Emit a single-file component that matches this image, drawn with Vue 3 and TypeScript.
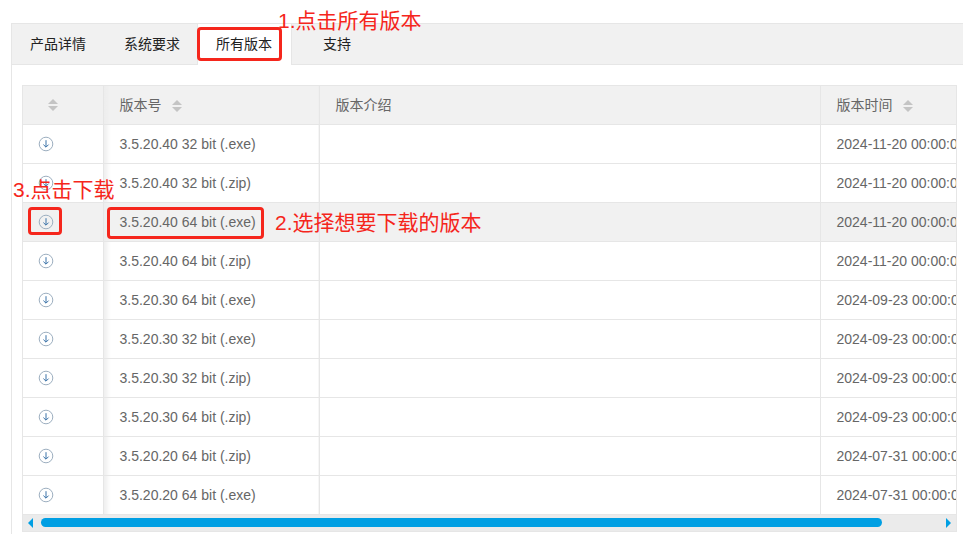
<script setup lang="ts">
interface Row { name: string; date: string; hover?: boolean }
const rows: Row[] = [
  { name: '3.5.20.40 32 bit (.exe)', date: '2024-11-20 00:00:00' },
  { name: '3.5.20.40 32 bit (.zip)', date: '2024-11-20 00:00:00' },
  { name: '3.5.20.40 64 bit (.exe)', date: '2024-11-20 00:00:00', hover: true },
  { name: '3.5.20.40 64 bit (.zip)', date: '2024-11-20 00:00:00' },
  { name: '3.5.20.30 64 bit (.exe)', date: '2024-09-23 00:00:00' },
  { name: '3.5.20.30 32 bit (.exe)', date: '2024-09-23 00:00:00' },
  { name: '3.5.20.30 32 bit (.zip)', date: '2024-09-23 00:00:00' },
  { name: '3.5.20.30 64 bit (.zip)', date: '2024-09-23 00:00:00' },
  { name: '3.5.20.20 64 bit (.zip)', date: '2024-07-31 00:00:00' },
  { name: '3.5.20.20 64 bit (.exe)', date: '2024-07-31 00:00:00' },
]
const tabs = ['产品详情', '系统要求', '所有版本', '支持']
</script>

<template>
  <div class="page">
    <div class="panel">
      <div class="tabbar">
        <div v-for="(t, i) in tabs" :key="t" class="tab" :class="['tab' + i, { active: i === 2 }]">{{ t }}</div>
      </div>
      <div class="body">
        <div class="grid">
          <div class="viewport">
            <table>
              <colgroup>
                <col class="c1" /><col class="c2" /><col class="c3" /><col class="c4" />
              </colgroup>
              <thead>
                <tr>
                  <th class="head-first"><span class="sort"><i class="up"></i><i class="down"></i></span></th>
                  <th class="shadow">版本号<span class="sort gap"><i class="up"></i><i class="down"></i></span></th>
                  <th>版本介绍</th>
                  <th>版本时间<span class="sort gap"><i class="up"></i><i class="down"></i></span></th>
                </tr>
              </thead>
              <tbody>
                <tr v-for="r in rows" :key="r.name" :class="{ hover: r.hover }">
                  <td class="icon-cell">
                    <svg class="dl" width="16" height="16" viewBox="0 0 16 16" fill="none">
                      <circle cx="8" cy="8" r="6.8" stroke="#9dafc0" stroke-width="1" />
                      <path d="M8 4.2V11M5.4 8.6 8 11.2l2.6-2.6" stroke="#3a72a8" stroke-width="1" />
                    </svg>
                  </td>
                  <td class="shadow">{{ r.name }}</td>
                  <td></td>
                  <td>{{ r.date }}</td>
                </tr>
              </tbody>
            </table>
          </div>
          <div class="scrollbar">
            <i class="arrow left"></i>
            <div class="thumb"></div>
            <i class="arrow right"></i>
          </div>
        </div>
      </div>
    </div>

    <div class="mark box1"></div>
    <div class="mark box2"></div>
    <div class="mark box3"></div>
    <div class="note n1">1.点击所有版本</div>
    <div class="note n2">2.选择想要下载的版本</div>
    <div class="note n3">3.点击下载</div>
  </div>
</template>

<style>
html, body { margin: 0; background: #fff; overflow: hidden; }
</style>

<style scoped>
.page {
  position: relative;
  width: 963px;
  height: 534px;
  overflow: hidden;
  padding-top: 23px;
  box-sizing: border-box;
  font-family: "Liberation Sans", "Noto Sans CJK SC", sans-serif;
}
.panel {
  margin-left: 11px;
  height: 511px;
  border-left: 1px solid #e6e6e6;
  box-sizing: border-box;
}
.tabbar {
  display: flex;
  height: 42px;
  box-sizing: border-box;
  background: #f1f1f1;
  border-top: 1px solid #e6e6e6;
  border-bottom: 1px solid #e6e6e6;
}
.tab {
  height: 41px;
  line-height: 40px;
  font-size: 14px;
  color: #222;
  box-sizing: border-box;
  padding: 0 18px;
}
.tab1 { padding-left: 20px; padding-right: 17px; }
.tab2 {
  padding: 0 18px;
  width: 95px;
  background: #fff;
  border-right: 1px solid #e6e6e6;
  border-left: 1px solid #e6e6e6;
}
.tab3 { padding-left: 31px; }
.body { padding: 20px 0 0 10px; }
.grid {
  width: 935px;
  border: 1px solid #e6e6e6;
  box-sizing: border-box;
}
.viewport { overflow: hidden; }
table {
  table-layout: fixed;
  border-collapse: collapse;
  width: 1099px;
  font-size: 14px;
  color: #666;
}
.c1 { width: 80px; }
.c2 { width: 216px; }
.c3 { width: 501px; }
.c4 { width: 302px; }
th, td {
  box-sizing: border-box;
  padding: 0 15px 0 16px;
  text-align: left;
  font-weight: 400;
  border: 1px solid #e6e6e6;
  border-top: 0;
  white-space: nowrap;
}
td { height: 39px; }
th { height: 38px; padding-bottom: 2px; background: #f1f1f1; color: #666; }
th:first-child, td:first-child { border-left: 0; }
.head-first { padding: 0 19px 2px 0; text-align: center; }
.icon-cell { padding: 0 34px 0 0; }
.shadow { background-image: linear-gradient(90deg, #ededed, rgba(237,237,237,0) 7px); }
tr.hover td { background-color: #f1f1f1; }
.sort {
  display: inline-flex;
  flex-direction: column;
  gap: 2px;
  vertical-align: middle;
}
.sort.gap { margin-left: 10px; }
.sort i { display: block; width: 0; height: 0; border: 5px solid transparent; }
.sort .up { border-top: 0; border-bottom: 5px solid #c4c4c4; }
.sort .down { border-bottom: 0; border-top: 5px solid #c4c4c4; }
.dl { display: block; margin: 0 auto; }
.scrollbar {
  position: relative;
  height: 16px;
  background: #ebebeb;
}
.thumb {
  position: absolute;
  left: 18px;
  top: 3px;
  width: 841px;
  height: 9px;
  border-radius: 5px;
  background: #009fe3;
}
.arrow {
  position: absolute;
  top: 3px;
  width: 0;
  height: 0;
  border: 5px solid transparent;
}
.arrow.left { left: 5px; border-left: 0; border-right: 5px solid #009fe3; }
.arrow.right { right: 5px; border-right: 0; border-left: 5px solid #009fe3; }
.mark {
  position: absolute;
  border: 3px solid #f5261c;
  border-radius: 4px;
  box-sizing: border-box;
}
.box1 { left: 197px; top: 27px; width: 85px; height: 34px; }
.box2 { left: 107px; top: 207px; width: 157px; height: 32px; }
.box3 { left: 28px; top: 207px; width: 34px; height: 28px; }
.note {
  position: absolute;
  color: #f5261c;
  font-size: 21px;
  line-height: 28px;
  white-space: nowrap;
}
.n1 { left: 278px; top: 7px; }
.n2 { left: 275px; top: 209px; }
.n3 { left: 13px; top: 176px; }
</style>
